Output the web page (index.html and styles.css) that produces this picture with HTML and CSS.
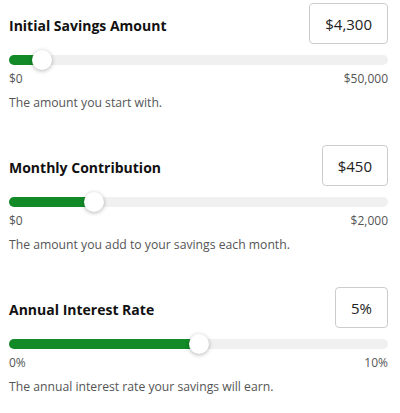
FILE: index.html
```html
<!DOCTYPE html>
<html lang="en">
<head>
    <meta charset="UTF-8">
    <meta name="viewport" content="width=device-width, initial-scale=1.0">
    <title>Savings Inputs</title>
    <link rel="stylesheet" href="styles.css">
</head>
<body>
    <div class="container">
        <div class="field">
            <div class="field-head">
                <h2>Initial Savings Amount</h2>
                <div class="value-box">$4,300</div>
            </div>
            <div class="slider">
                <div class="slider-fill" style="width: 8.6%"></div>
                <div class="slider-thumb" style="left: 8.6%"></div>
            </div>
            <div class="slider-labels">
                <span>$0</span>
                <span>$50,000</span>
            </div>
            <p class="hint">The amount you start with.</p>
        </div>

        <div class="field">
            <div class="field-head">
                <h2>Monthly Contribution</h2>
                <div class="value-box">$450</div>
            </div>
            <div class="slider">
                <div class="slider-fill" style="width: 22.5%"></div>
                <div class="slider-thumb" style="left: 22.5%"></div>
            </div>
            <div class="slider-labels">
                <span>$0</span>
                <span>$2,000</span>
            </div>
            <p class="hint">The amount you add to your savings each month.</p>
        </div>

        <div class="field">
            <div class="field-head">
                <h2>Annual Interest Rate</h2>
                <div class="value-box">5%</div>
            </div>
            <div class="slider">
                <div class="slider-fill" style="width: 50%"></div>
                <div class="slider-thumb" style="left: 50%"></div>
            </div>
            <div class="slider-labels">
                <span>0%</span>
                <span>10%</span>
            </div>
            <p class="hint">The annual interest rate your savings will earn.</p>
        </div>
    </div>
</body>
</html>
```

FILE: styles.css
```css
body {
    font-family: 'Open Sans', sans-serif;
    background: #ffffff;
    color: #111111;
    margin: 0;
    padding: 0;
}
.container {
    padding: 3px 12px 0 9px;
}
.field {
    margin-bottom: 33px;
}
.field-head {
    display: flex;
    justify-content: space-between;
    align-items: center;
    height: 41px;
}
h2 {
    margin: 0;
    padding-top: 3px;
    font-size: 14px;
    font-weight: 700;
    color: #111111;
}
.value-box {
    height: 41px;
    box-sizing: border-box;
    padding: 0 15px;
    display: flex;
    align-items: center;
    border: 1px solid #cccccc;
    border-radius: 4px;
    font-size: 15px;
    color: #222222;
}
.slider {
    position: relative;
    height: 10px;
    margin-top: 11px;
    background: #f0f0f0;
    border-radius: 5px;
}
.slider-fill {
    height: 100%;
    background: #118a27;
    border-radius: 5px 0 0 5px;
}
.slider-thumb {
    position: absolute;
    top: 50%;
    width: 20px;
    height: 20px;
    margin: -10px 0 0 -10px;
    background: #ffffff;
    border-radius: 50%;
    box-shadow: 0 1px 4px rgba(0, 0, 0, 0.3);
}
.slider-labels {
    display: flex;
    justify-content: space-between;
    margin-top: 5px;
    font-size: 12px;
    line-height: 18px;
    color: #555555;
}
.hint {
    margin: 6px 0 0;
    font-size: 12.2px;
    line-height: 18px;
    color: #555555;
}
```
